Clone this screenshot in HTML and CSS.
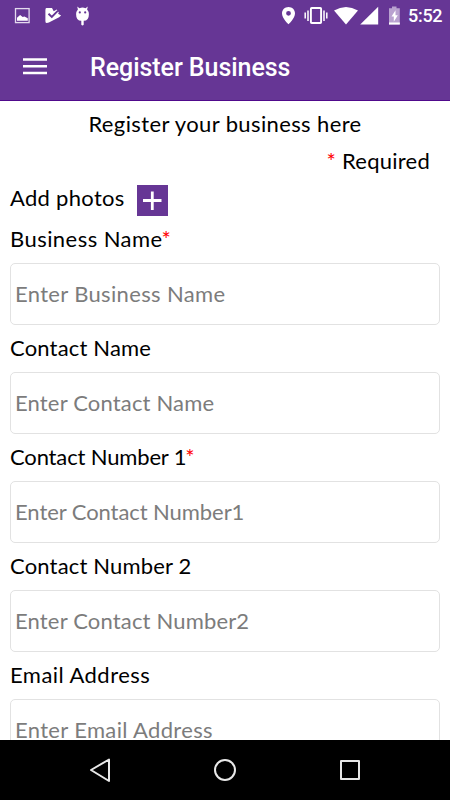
FILE: index.html
```
<!DOCTYPE html>
<html lang="en">
<head>
<meta charset="utf-8">
<meta name="viewport" content="width=device-width, initial-scale=1">
<title>Register Business</title>
<link rel="stylesheet" href="styles.css">
</head>
<body>
<div class="screen">
  <header class="top">
    <div class="status">
      <svg class="status-left" width="110" height="32" viewBox="0 0 110 32" fill="#fff">
        <rect x="15.500" y="8.600" width="13.600" height="14" fill="none" stroke="#e4daee" stroke-width="1.300"/>
        <path d="M17 20.800v-3l3.100-2.700 2.600 2 1.700-.7 3.400 1.800v2.600z"/>
        <path d="M46.400 8h5.600l1.700 3.200 3.100-1.700 2 3-.7 1.200 3 1.700-2 1.800-10.200 5.400q-3.500 1.400-3.500-1.400V10q0-2 1-2z"/>
        <path d="M48.500 13.800l3.300 3.200 6.200-6.300" fill="none" stroke="#663695" stroke-width="1.900"/>
        <path d="M77.200 6.500l2.300 1.700q3-1.200 6 0l2.300-1.700-.7 3q1.800 2 1.800 4.700 0 6.600-5.200 6.600v4q-1.200 1.600-2.400 0v-4q-5.200 0-5.200-6.600 0-2.700 1.800-4.700z"/>
        <circle cx="79.800" cy="12.400" r="1.100" fill="#663695"/><circle cx="85.200" cy="12.400" r="1.100" fill="#663695"/>
      </svg>
      <svg class="status-right" width="125" height="32" viewBox="280 0 125 32" fill="#fff">
        <path fill-rule="evenodd" d="M288.500 7c-3.700 0-6.500 2.800-6.500 6.400 0 4.700 6.500 10.900 6.500 10.900s6.500-6.200 6.500-10.900c0-3.600-2.800-6.400-6.500-6.400zm0 3.900a2.400 2.400 0 1 1 0 4.800 2.400 2.400 0 0 1 0-4.800z"/>
        <rect x="310.900" y="8" width="10.200" height="15" rx=".8" fill="none" stroke="#fff" stroke-width="1.900"/>
        <path d="M305.200 12.500v6M308 10.500v10.400M324 10.500v10.400M326.800 12.500v6" fill="none" stroke="#fff" stroke-width="1.500"/>
        <path d="M334 10.500q12-7 24 0L346 24.500z"/>
        <path d="M378.200 6.700v17.800h-18z"/>
        <path d="M389 8.200h3V6.500h4.500v1.700h3.300v16.300H389z" fill="#b9a2d0"/>
        <path d="M389 22.500h10.800v2.100H389zM395.500 10.200l-4 6.300h2.300v5.200l4-6.500h-2.300z"/>
      </svg>
      <span class="clock">5:52</span>
    </div>
    <div class="appbar">
      <svg class="menu" width="24" height="18" viewBox="0 0 24 18"><path d="M0 1.500h24M0 8.300h24M0 15h24" stroke="#fff" stroke-width="2.500"/></svg>
      <h1>Register Business</h1>
    </div>
  </header>
  <main class="form">
    <p class="intro">Register your business here</p>
    <p class="required"><span class="star">*</span> Required</p>
    <div class="photos"><span>Add photos</span>
      <button class="add" aria-label="Add"><svg width="31" height="31" viewBox="0 0 31 31"><path d="M6 15.500h18.500M15.300 6.500v18.500" stroke="#fff" stroke-width="2.800"/></svg></button>
    </div>
    <label class="field wide"><span class="label">Business Name<span class="star">*</span></span><span class="box">Enter Business Name</span></label>
    <label class="field medium"><span class="label">Contact Name</span><span class="box">Enter Contact Name</span></label>
    <label class="field tight"><span class="label">Contact Number 1<span class="star">*</span></span><span class="box">Enter Contact Number1</span></label>
    <label class="field medium"><span class="label">Contact Number 2</span><span class="box">Enter Contact Number2</span></label>
    <label class="field wide"><span class="label">Email Address</span><span class="box">Enter Email Address</span></label>
  </main>
  <nav class="nav">
    <svg width="450" height="60" viewBox="0 0 450 60" fill="none" stroke="#e8e8e8" stroke-width="2" stroke-linejoin="round">
      <path d="M109 19.500v21.500L91 30z"/><circle cx="225" cy="30" r="10"/><rect x="341" y="21" width="18" height="18"/>
    </svg>
  </nav>
</div>
</body>
</html>
```
FILE: styles.css
```
* { box-sizing: border-box; }
body { margin: 0; background: #fff; }
.screen { width: 450px; height: 800px; display: flex; flex-direction: column; overflow: hidden; font-family: Lato, sans-serif; font-size: 22px; color: #000; }
.top { flex: none; height: 101px; background: #663695; border-bottom: 1px solid #500a8c; color: #fff; font-family: Roboto, sans-serif; }
.status { height: 32px; display: flex; align-items: center; }
.status-right { margin-left: 170px; }
.clock { margin-left: 3px; font-size: 18px; font-weight: 500; line-height: 32px; letter-spacing: -.3px; }
.appbar { height: 69px; display: flex; align-items: center; padding-left: 23px; }
.menu { margin-right: 43px; }
h1 { margin: 3px 0 0; font-size: 25px; line-height: 32px; font-weight: 500; letter-spacing: -.05px; white-space: nowrap; }
.form { flex: 1; min-height: 0; overflow: hidden; padding: 9px 10px 0; }
p { margin: 0; line-height: 28px; white-space: nowrap; }
.intro { text-align: center; letter-spacing: .38px; }
.required { margin-top: 9px; padding-right: 10px; text-align: right; letter-spacing: .25px; }
.star { color: #f00; }
.photos { height: 49px; padding-top: 10px; display: flex; line-height: 28px; letter-spacing: .3px; }
.photos span { margin-top: -1px; }
.add { width: 31px; height: 31px; margin-left: 12.5px; padding: 0; border: 0; background: #663695; }
.add svg { display: block; }
.field { display: block; height: 109px; }
.label { display: block; height: 39px; padding-top: 1px; line-height: 28px; white-space: nowrap; }
.label .star { margin-left: -1px; }
.box { display: flex; align-items: center; height: 62px; padding: 0 0 1px 4px; border: 1px solid #e2e2e2; border-radius: 5px; color: #7c7c7c; white-space: nowrap; }
.wide .label { letter-spacing: .45px; }
.wide .box { letter-spacing: .34px; }
.medium .label { letter-spacing: .17px; }
.medium .box { letter-spacing: .17px; }
.tight .label { letter-spacing: -.15px; }
.tight .box { letter-spacing: -.07px; }
.nav { flex: none; height: 60px; background: #000; }
.nav svg { display: block; }
```
